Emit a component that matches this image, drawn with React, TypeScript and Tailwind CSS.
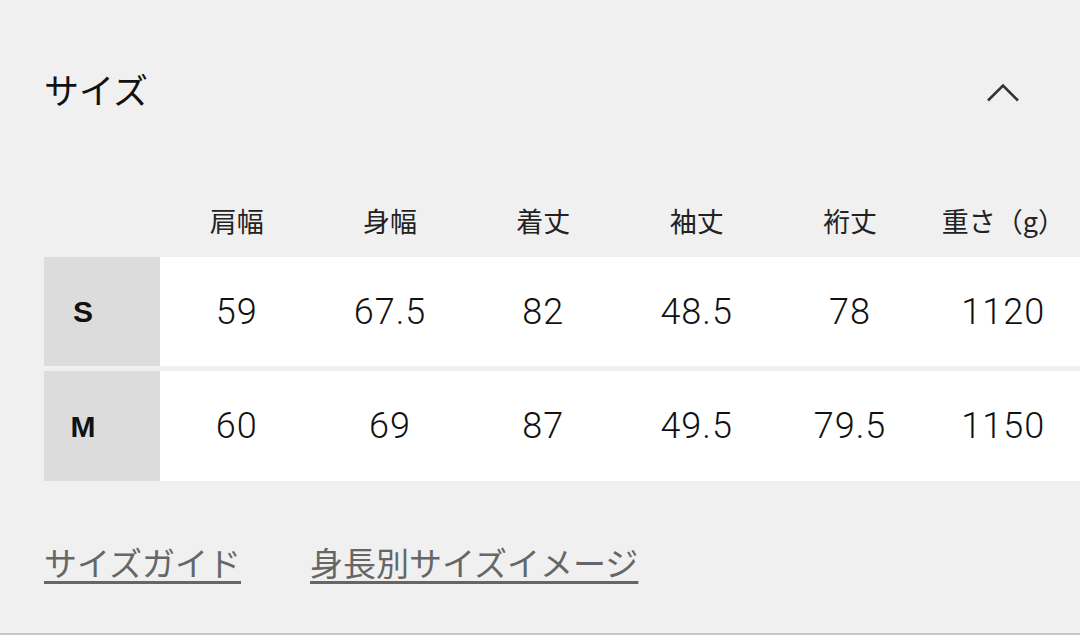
import React from "react";

const cols = ["肩幅", "身幅", "着丈", "袖丈", "裄丈", "重さ（g）"];
const rows = [
  { size: "S", values: ["59", "67.5", "82", "48.5", "78", "1120"] },
  { size: "M", values: ["60", "69", "87", "49.5", "79.5", "1150"] },
];

const jp = { fontFamily: '"Noto Sans CJK JP", "Noto Sans", sans-serif' };
const num = { fontFamily: 'Roboto, "Liberation Sans", Arial, sans-serif' };
const lbl = { fontFamily: '"Liberation Sans", Arial, sans-serif' };

export default function App() {
  return (
    <div className="w-[1080px] h-[635px] bg-[#f0f0f0] overflow-hidden border-b-2 border-[#c9c9c9] text-[#111]" style={jp}>
      <div className="flex items-center justify-between pl-[44px] pr-[60px] pt-[65px] h-[113px]">
        <div className="text-[35px] leading-[48px] text-[#111]">サイズ</div>
        <svg width="34" height="20" viewBox="0 0 34 20" fill="none" className="mt-[8px]">
          <path d="M2 17.5 L17 2.5 L32 17.5" stroke="#333" strokeWidth="2.6" />
        </svg>
      </div>

      <div className="ml-[44px] flex items-end h-[144px] pb-[18px]">
        <div className="w-[116px] shrink-0" />
        {cols.map((c) => (
          <div key={c} className="flex-1 text-center text-[27px] leading-[36px] text-[#222]">
            {c}
          </div>
        ))}
      </div>

      <div className="ml-[44px] flex flex-col gap-[5px]">
        {rows.map((r, i) => (
          <div key={r.size} className={`flex ${i === 0 ? "h-[109px]" : "h-[110px]"}`}>
            <div className="w-[116px] shrink-0 bg-[#dcdcdc] flex items-center">
              <span className="w-[78px] text-center text-[30px] font-bold" style={lbl}>
                {r.size}
              </span>
            </div>
            <div className="flex-1 bg-white flex items-center">
              {r.values.map((v, j) => (
                <div key={j} className="flex-1 text-center text-[36px] font-light tracking-[1px] text-[#111]" style={num}>
                  {v}
                </div>
              ))}
            </div>
          </div>
        ))}
      </div>

      <div className="ml-[44px] mt-[60px] flex gap-[69px] text-[33px] leading-[42px] text-[#666]">
        <span className="underline decoration-[3px] underline-offset-[5px] decoration-[#666]">サイズガイド</span>
        <span className="underline decoration-[3px] underline-offset-[5px] decoration-[#666]">身長別サイズイメージ</span>
      </div>
    </div>
  );
}
